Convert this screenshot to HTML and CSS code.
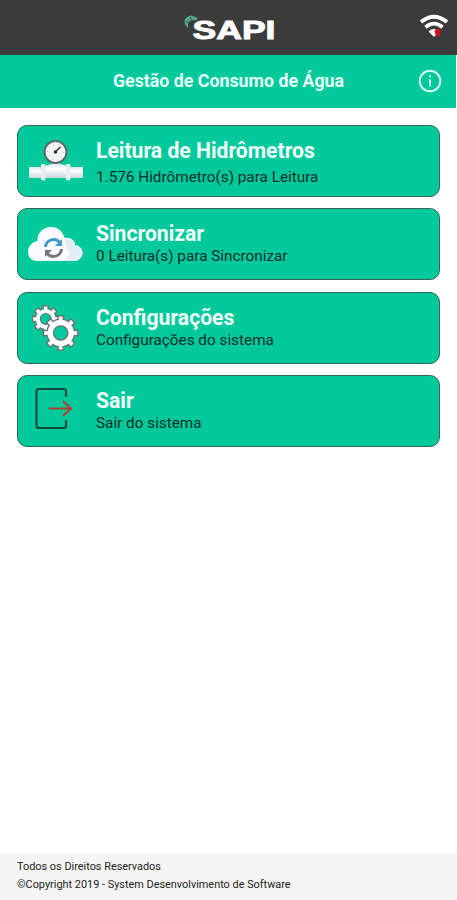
FILE: index.html
```html
<!DOCTYPE html>
<html lang="pt-BR">
<head>
<meta charset="utf-8">
<title>SAPI</title>
<link rel="stylesheet" href="styles.css">
</head>
<body>
<div class="app">
  <header class="topbar">
    <svg class="logo" width="96" height="30" viewBox="0 0 96 30">
      <path d="M5 14C-1 9 1 3 8 1.500l7 2.500-2 2.500c-5-1-8 1-8 4.500z" fill="#57a184"/>
      <path d="M3 7l3 2M7 3l2 3" stroke="#315f4f" fill="none"/>
      <text x="9.500" y="24.500" textLength="83" lengthAdjust="spacingAndGlyphs" class="logo-text">SAPI</text>
    </svg>
    <svg class="wifi" width="30" height="26" viewBox="0 0 30 26">
      <path d="M2 8Q15-2.500 28 8M6.500 13.200Q15 6 23.500 13.200" fill="none" stroke="#fff" stroke-width="3.800"/>
      <path d="M9.500 17.200Q15 12.800 20.500 17.200L15 23z" fill="#fff"/>
      <path d="M15.500 17l2-2.500 4 1.500 1-1.500-1 4-1 4-2-1-1.500 1z" fill="#c91420"/>
    </svg>
  </header>
  <div class="titlebar">
    <h1 class="title">Gestão de Consumo de Água</h1>
    <svg class="info" width="24" height="24" viewBox="0 0 24 24">
      <circle cx="12" cy="12" r="10.300" fill="none" stroke="#d5fff0" stroke-width="2"/>
      <path d="M12 6.300v2.200M12 10.500v7" stroke="#d5fff0" stroke-width="2"/>
    </svg>
  </div>
  <main class="menu">
    <a class="card">
      <svg class="icon" width="56" height="60" viewBox="0 -2 56 60">
        <defs><linearGradient id="pipe" x2="0" y2="1"><stop stop-color="#d7e5e5"/><stop offset=".35" stop-color="#fff"/><stop offset="1" stop-color="#c8d7da"/></linearGradient></defs>
        <path d="M24 30h8v7h-8z" fill="#dce5e5"/>
        <path d="M1 35h54v11H1z" fill="url(#pipe)"/>
        <path d="M17 34q11-5 22 0v12H17z" fill="url(#pipe)"/>
        <rect x="13" y="32" width="4.500" height="16.500" rx="1" fill="#e6eeee"/>
        <rect x="38" y="32" width="4.500" height="16.500" rx="1" fill="#e6eeee"/>
        <circle cx="27.500" cy="20" r="11" fill="#f5f7f7" stroke="#596b6d" stroke-width="2"/>
        <circle cx="27.500" cy="20" r="8" fill="none" stroke="#aab4b4" stroke-dasharray="1 4"/>
        <path d="M26.500 20.500l6-5.500" stroke="#333" stroke-width="1.600"/><circle cx="27.500" cy="20" r="1.800" fill="#333"/>
      </svg>
      <div class="text"><h2 class="name">Leitura de Hidrômetros</h2><p class="desc d1">1.576 Hidrômetro(s) para Leitura</p></div>
    </a>
    <a class="card">
      <svg class="icon" width="56" height="62" viewBox="0 -3 56 62">
        <path d="M9 45C3 45 0 40.500 0 35.500S4 26 9.500 25C9 17 15 11 23 11c7 0 12 4.500 13.500 11C43 21 47 25 47 29c5 1 7.500 4 7.500 8S51 45 46 45z" fill="#fafcff"/>
        <path d="M37 24c6-2 10 1 10 5 5 1 7.500 4 7.500 8S51 45 46 45H33q7-2 9-8-5-5-5-13z" fill="#e3edf6"/>
        <g fill="none" stroke-width="2.900"><path d="M17.500 31a8 8 0 0 1 14.500-4" stroke="#3b9acb"/><path d="M33.500 33a8 8 0 0 1-14.500 4" stroke="#777"/></g>
        <path d="M34 23v7h-7z" fill="#3b9acb"/><path d="M17 41v-7h7z" fill="#777"/>
      </svg>
      <div class="text"><h2 class="name">Sincronizar</h2><p class="desc">0 Leitura(s) para Sincronizar</p></div>
    </a>
    <a class="card">
      <svg class="icon" width="56" height="58" viewBox="0 -1 56 58">
        <g fill="none" stroke="#68736f">
          <circle cx="17.700" cy="21" r="10.200" stroke-width="7.400" pathLength="80" stroke-dasharray="7 3" stroke-dashoffset="3.500"/>
          <circle cx="17.700" cy="21" r="8" stroke-width="6.200"/>
        </g>
        <g fill="none" stroke="#fff">
          <circle cx="17.700" cy="21" r="10" stroke-width="5" pathLength="80" stroke-dasharray="4.200 5.800" stroke-dashoffset="2.100"/>
          <circle cx="17.700" cy="21" r="8" stroke-width="4"/>
        </g>
        <g fill="none" stroke="#68736f">
          <circle cx="32.700" cy="35" r="14" stroke-width="8" pathLength="80" stroke-dasharray="5.600 4.400" stroke-dashoffset="2.800"/>
          <circle cx="32.700" cy="35" r="10.500" stroke-width="8"/>
        </g>
        <g fill="none" stroke="#fff">
          <circle cx="32.700" cy="35" r="13.800" stroke-width="5.400" pathLength="80" stroke-dasharray="3.400 6.600" stroke-dashoffset="1.700"/>
          <circle cx="32.700" cy="35" r="10.500" stroke-width="5.400"/>
        </g>
      </svg>
      <div class="text"><h2 class="name">Configurações</h2><p class="desc">Configurações do sistema</p></div>
    </a>
    <a class="card">
      <svg class="icon" width="56" height="58" viewBox="0 -1 56 58">
        <path d="M38 16v-6q0-2-2-2H11q-2.500 0-2.500 2.500v34q0 2.500 2.500 2.500h25q2 0 2-2v-6" fill="none" stroke="#124c3b" stroke-width="2.200"/>
        <path d="M20.500 27.500H43M35 20l8 7.500-8 7.500" fill="none" stroke="#b33d2c" stroke-width="2"/>
      </svg>
      <div class="text"><h2 class="name">Sair</h2><p class="desc">Sair do sistema</p></div>
    </a>
  </main>
  <footer class="footer">
    <p>Todos os Direitos Reservados</p>
    <p>©Copyright 2019 - System Desenvolvimento de Software</p>
  </footer>
</div>
</body>
</html>
```
FILE: styles.css
```css
* { box-sizing: border-box; }
body { margin: 0; background: #fff; font-family: Roboto, "Liberation Sans", sans-serif; }
h1, h2, p { margin: 0; }
svg { display: block; flex: none; }
.app { height: 900px; display: flex; flex-direction: column; }
.topbar { height: 55px; background: #3b3b3b; display: grid; grid-template-columns: 1fr auto 1fr; padding: 14px 8px 0; }
.logo { grid-column: 2; margin-left: 4px; }
.logo-text { font: bold 25px "Liberation Sans", sans-serif; fill: #fff; stroke: #fff; stroke-width: .9px; }
.wifi { justify-self: end; }
.titlebar { height: 53px; margin-right: 1px; background: #01c99b; display: grid; grid-template-columns: 1fr auto 1fr; align-items: center; padding: 0 14px 2px; }
.title { grid-column: 2; font-size: 17.8px; line-height: 22px; font-weight: 700; color: #e4fff7; white-space: nowrap; margin-left: 1px; }
.info { justify-self: end; }
.menu { flex: 1; padding: 17px 17px 0; display: flex; flex-direction: column; gap: 11.3px; }
.card { height: 72px; display: flex; align-items: flex-start; background: #01c99b; border: 1px solid #32685a; border-radius: 10px; padding: 4px 10px; }
.text { margin-left: 12px; padding-top: 8px; white-space: nowrap; }
.name { font-size: 21.15px; line-height: 26px; font-weight: 700; color: #f2fffb; }
.desc { font-size: 15.3px; line-height: 20px; color: #05302a; margin-top: -1px; }
.d1 { margin-top: 3px; }
.footer { height: 47px; background: #f5f5f5; padding: 5px 17px 0; font-size: 10.9px; line-height: 18px; color: #222; white-space: nowrap; }
```
